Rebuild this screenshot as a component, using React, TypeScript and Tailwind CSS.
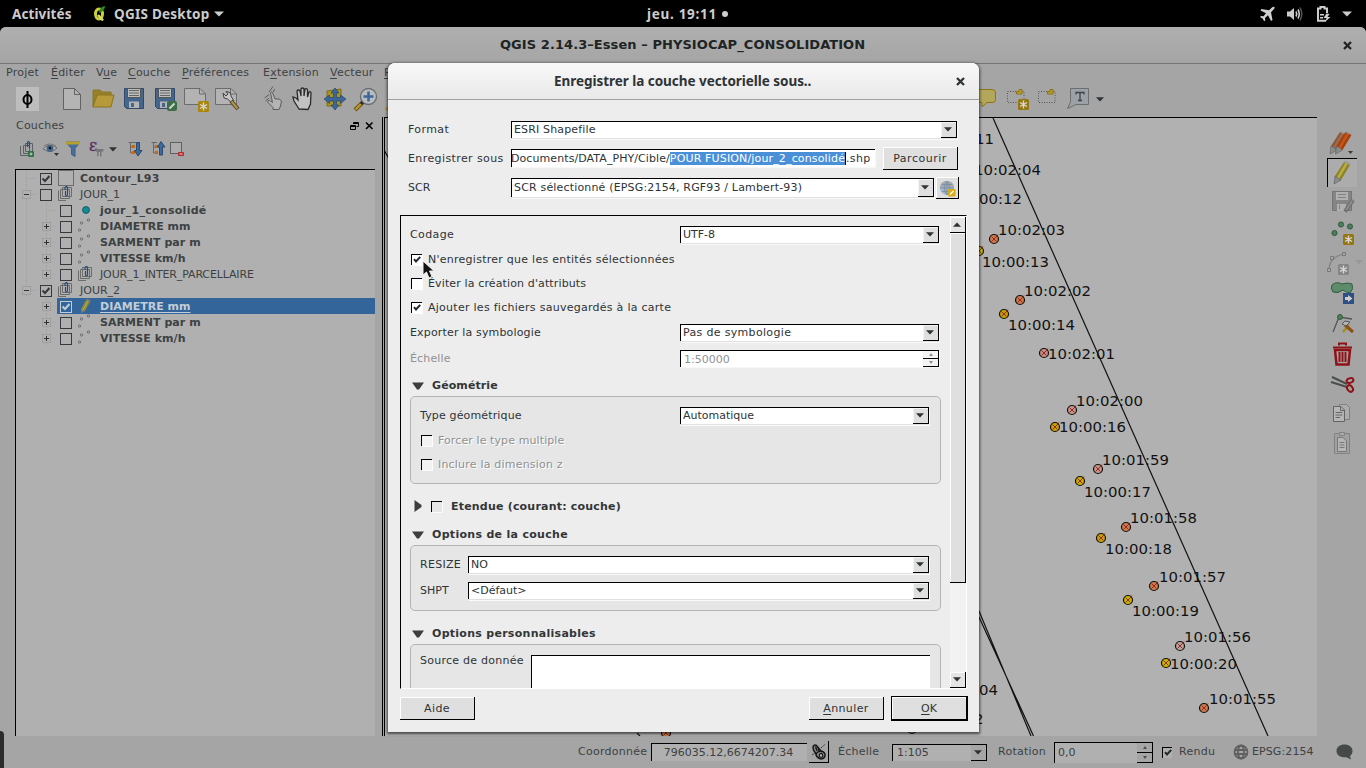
import React from "react";

type Kids = { children?: React.ReactNode };

function U({ children }: Kids) {
  return <span className="underline underline-offset-2">{children}</span>;
}

function Menu({ w, children }: Kids & { w: string }) {
  return <span className={`${w} shrink-0 whitespace-nowrap`}>{children}</span>;
}

function Down({ className = "" }: { className?: string }) {
  return (
    <svg className={`shrink-0 ${className}`} width="8" height="5" viewBox="0 0 8 5">
      <path d="M0 0.3H8L4 4.6Z" fill="#2e3436" />
    </svg>
  );
}

/* ---------- form widgets ---------- */

function Combo({ w, h = "h-[18px]", dim = false, children }: Kids & { w: string; h?: string; dim?: boolean }) {
  return (
    <div
      className={`${w} ${h} flex shrink-0 border-l border-t border-black ${
        dim ? "bg-[#b0b0b0]" : "bg-white shadow-[0_1px_0_#e0e0e0,1px_2px_0_#fafafa]"
      }`}
    >
      <div className="flex min-w-0 flex-1 items-center overflow-hidden whitespace-nowrap pl-[2px] leading-[14px]">{children}</div>
      <div
        className={`flex w-4 items-center justify-center border-b border-r border-black pr-px ${
          dim ? "bg-[#a6a6a6]" : "bg-[#dfdfdf] shadow-[inset_1px_1px_0_#f4f4f4]"
        }`}
      >
        <Down />
      </div>
    </div>
  );
}

function Spin({ w, h, dim = false, children }: Kids & { w: string; h: string; dim?: boolean }) {
  const fill = dim ? "#4a4e4f" : "#8f8f8f";
  return (
    <div
      className={`${w} ${h} flex shrink-0 border-l border-t border-black ${
        dim ? "bg-[#b0b0b0]" : "bg-white shadow-[0_1px_0_#f8f8f8,1px_1px_0_#f8f8f8]"
      }`}
    >
      <div className="flex flex-1 items-center pl-[3px] pt-px">{children}</div>
      <div className={`flex w-4 flex-col border-r border-black ${dim ? "bg-[#a6a6a6]" : "bg-[#f4f4f4]"}`}>
        <div className="flex flex-1 items-center justify-center border-b border-black">
          <svg width="4" height="3">
            <path d="M0 3L2 0L4 3Z" fill={fill} />
          </svg>
        </div>
        <div className="flex flex-1 items-center justify-center border-b border-black">
          <svg width="4" height="3">
            <path d="M0 0L2 3L4 0Z" fill={fill} />
          </svg>
        </div>
      </div>
    </div>
  );
}

function Check({ on = false, fill = "bg-white" }: { on?: boolean; fill?: string }) {
  return (
    <div className={`h-[11px] w-[11px] shrink-0 border-l border-t border-black ${fill} shadow-[1px_1px_0_#fcfcfc]`}>
      {on && (
        <svg width="10" height="10" viewBox="0 0 10 10">
          <path d="M2 4.2L4 6.4L8.2 1.8" stroke="#23292b" strokeWidth="2" fill="none" />
        </svg>
      )}
    </div>
  );
}

function Button({ w, h = "h-[23px]", children }: Kids & { w: string; h?: string }) {
  return (
    <div
      className={`${w} ${h} flex shrink-0 items-center justify-center border-b border-r border-black bg-[#dfdfdf] pt-[2px] shadow-[inset_1px_1px_0_#fff]`}
    >
      {children}
    </div>
  );
}

function Heading({ h, track, children }: Kids & { h: string; track: string }) {
  return (
    <div className={`${h} flex shrink-0 items-center pl-[2px] font-bold text-[#333637]`}>
      <svg width="12" height="8" viewBox="0 0 12 8" className="mr-[8px] mt-[2px]">
        <path d="M0 0.5H12L7 7.5H5Z" fill="#3d3d3d" />
      </svg>
      <span className={`mt-[2px] ${track}`}>{children}</span>
    </div>
  );
}

/* ---------- layer tree ---------- */

function GroupIcon() {
  return (
    <svg width="16" height="16" viewBox="0 0 16 16" fill="none">
      <path d="M0.500 4.500V14.500H8" stroke="#6a6d6c" />
      <path d="M2.500 3.500V12.500H11.500V3.500Z" stroke="#6a6d6c" />
      <path d="M4.500 1.500H13.500V10.500H4.500Z" stroke="#6a6d6c" />
      <path d="M7 4V1.500Q8.500 -0.500 9.500 1.500V9Q8.500 11 7.500 9V5" stroke="#284a80" strokeWidth="1.200" />
    </svg>
  );
}

function PointsIcon() {
  return (
    <svg width="16" height="16" viewBox="0 0 16 16" fill="none" stroke="#666968" strokeWidth="0.9">
      <circle cx="1.500" cy="12" r="1.200" />
      <circle cx="3.500" cy="5" r="1.200" />
      <circle cx="10.500" cy="2" r="1.200" />
    </svg>
  );
}

function Box({ on = false, light = false }: { on?: boolean; light?: boolean }) {
  const c = light ? "#c4cdd6" : "#35393b";
  return (
    <svg width="12" height="12" viewBox="0 0 12 12" fill="none" className="shrink-0">
      <rect x="0.500" y="0.500" width="11" height="11" stroke={c} />
      {on && <path d="M2.500 5.500L5 8L9.500 3" stroke={c} strokeWidth="2" />}
    </svg>
  );
}

function Expander({ kind }: { kind: "+" | "-" | "" }) {
  return (
    <svg width="14" height="16" viewBox="0 0 14 16" fill="none" className="shrink-0">
      {kind === "" ? (
        <path d="M4.500 0V16M4.500 8.500H14" stroke="#a0a0a0" strokeDasharray="1 1" />
      ) : (
        <>
          <path d="M4.500 0V4M4.500 13V16M9 8.500H14" stroke="#a0a0a0" strokeDasharray="1 1" />
          <rect x="0.500" y="4.500" width="8" height="8" stroke="#9e9e9e" />
          <path d={kind === "+" ? "M2 8.500H7M4.500 6V11" : "M2 8.500H7"} stroke="#2e3436" />
        </>
      )}
    </svg>
  );
}

type Row = { name: string; lvl: 0 | 1; exp: "+" | "-" | ""; on?: boolean; cls?: string; icon: string; sel?: boolean; trunk?: boolean };

const rows: Row[] = [
  { name: "Contour_L93", lvl: 0, exp: "", on: true, cls: "font-bold tracking-[0.2px]", icon: "poly" },
  { name: "JOUR_1", lvl: 0, exp: "-", icon: "group" },
  { name: "jour_1_consolidé", lvl: 1, exp: "", cls: "font-bold tracking-[0.28px]", icon: "dot", trunk: true },
  { name: "DIAMETRE mm", lvl: 1, exp: "+", cls: "font-bold", icon: "pts", trunk: true },
  { name: "SARMENT par m", lvl: 1, exp: "+", cls: "font-bold tracking-[0.06px]", icon: "pts", trunk: true },
  { name: "VITESSE km/h", lvl: 1, exp: "+", cls: "font-bold tracking-[0.05px]", icon: "pts", trunk: true },
  { name: "JOUR_1_INTER_PARCELLAIRE", lvl: 1, exp: "+", cls: "tracking-[-0.13px]", icon: "group", trunk: true },
  { name: "JOUR_2", lvl: 0, exp: "-", on: true, icon: "group" },
  { name: "DIAMETRE mm", lvl: 1, exp: "+", on: true, cls: "font-bold", icon: "pencil", sel: true },
  { name: "SARMENT par m", lvl: 1, exp: "+", cls: "font-bold tracking-[0.06px]", icon: "pts" },
  { name: "VITESSE km/h", lvl: 1, exp: "+", cls: "font-bold tracking-[0.05px]", icon: "pts" },
];

function TreeRow({ r }: { r: Row }) {
  return (
    <div className="flex h-4 pl-[6px]">
      {r.lvl === 1 && (
        <svg width="20" height="16" className="shrink-0">
          {r.trunk && <path d="M4.500 0V16" stroke="#a0a0a0" strokeDasharray="1 1" />}
        </svg>
      )}
      <Expander kind={r.exp} />
      <div className={`ml-px flex min-w-0 flex-1 items-center ${r.sel ? "bg-[#33659a] text-[#c3cdd6]" : ""}`}>
        <div className="ml-[3px] mt-[2px]">
          <Box on={r.on} light={r.sel} />
        </div>
        <div className="ml-[6px] w-4 shrink-0">
          {r.icon === "group" && <GroupIcon />}
          {r.icon === "pts" && <PointsIcon />}
          {r.icon === "poly" && <div className="h-4 w-4 border border-[#6a6d6c]" />}
          {r.icon === "dot" && (
            <svg width="16" height="16">
              <circle cx="8" cy="8" r="3.400" fill="#0f8d97" stroke="#155a60" />
            </svg>
          )}
          {r.icon === "pencil" && (
            <svg width="16" height="16" viewBox="0 0 16 16">
              <path d="M3 11L8 2L12 4L7 13L3 15Z" fill="#8f8b35" />
              <path d="M3 11L7 13L3 15ZM8 2L9 0.500L13 2.500L12 4Z" fill="#777d80" />
              <path d="M5 12L10 3" stroke="#b5b25e" />
            </svg>
          )}
        </div>
        <span className={`ml-[6px] mt-[2px] whitespace-nowrap ${r.cls ?? ""} ${r.sel ? "underline underline-offset-2" : ""}`}>
          {r.name}
        </span>
      </div>
    </div>
  );
}

/* ---------- toolbar ---------- */

function Ico({ w = "w-[31px]", children }: Kids & { w?: string }) {
  return (
    <div className={`${w} flex shrink-0 justify-center`}>
      <svg width="24" height="24" viewBox="0 0 24 24" fill="none" className="shrink-0 overflow-visible">
        {children}
      </svg>
    </div>
  );
}

function Star({ x, y, fill = "#a8870c" }: { x: number; y: number; fill?: string }) {
  return (
    <g transform={`translate(${x} ${y})`}>
      <rect width="11" height="11" rx="1.500" fill={fill} />
      <path d="M5.500 1.500V9.500M2 3.500L9 7.500M9 3.500L2 7.500" stroke="#d8d8d8" strokeWidth="1.400" />
    </g>
  );
}

function Floppy() {
  return (
    <g>
      <path d="M2.500 1.500H21.500V21.500H4.500L2.500 19.500Z" fill="#44658c" stroke="#33496a" />
      <path d="M5.500 1.500H18.500V10.500H5.500Z" fill="#bcbcbc" stroke="#555" />
      <path d="M7 3.500H17M7 6H17M7 8.500H17" stroke="#666" />
      <path d="M7 14.500H17V21H7Z" fill="#b4b4b4" />
      <path d="M9 16H12V20H9Z" fill="#44658c" />
    </g>
  );
}

function MainToolbar() {
  return (
    <div className="flex h-[36px] shrink-0 items-center overflow-hidden pl-4">
      <div className="mr-[17px] flex h-[24px] w-[23px] shrink-0 items-center justify-center bg-[#bdbdbd]">
        <svg width="11" height="17" viewBox="0 0 11 17" fill="none" stroke="#000" strokeWidth="2">
          <ellipse cx="5.500" cy="8.500" rx="4" ry="4.500" />
          <path d="M5.500 0V17" />
        </svg>
      </div>
      <Ico>
        <path d="M3.500 1.500H14.500L20.500 7.500V22.500H3.500Z" fill="#b4b4b4" stroke="#606362" />
        <path d="M14.500 1.500V7.500H20.500" stroke="#606362" />
      </Ico>
      <Ico>
        <path d="M2 20V3H9L11 5H20V9" fill="#95802b" stroke="#8a7420" />
        <path d="M2 20L6 8H23L20 20Z" fill="#b69a3a" stroke="#8a7420" />
      </Ico>
      <Ico>
        <Floppy />
      </Ico>
      <Ico>
        <Floppy />
        <rect x="14" y="14" width="10" height="10" rx="2" fill="#3e6e48" />
        <path d="M16.500 21.500L21.500 16.500" stroke="#d0d6d0" strokeWidth="2" />
      </Ico>
      <Ico>
        <path d="M0.500 1.500H16L21.500 7V17.500H0.500Z" fill="#b3b3b3" stroke="#6a6d6c" />
        <path d="M15.500 1.500V7H21.500" stroke="#6a6d6c" />
        <Star x={14} y={14} />
      </Ico>
      <Ico>
        <path d="M0.500 1.500H16L21.500 7V17.500H0.500Z" fill="#b3b3b3" stroke="#6a6d6c" />
        <path d="M15.500 1.500V7H21.500" stroke="#6a6d6c" />
        <path d="M8 6L11 9L13 7L11 4.500L15 5.500L16.500 10L19 14L17 16L12.500 12L9 11Z" fill="#c6c6c6" stroke="#444" />
        <path d="M16 14L23 22" stroke="#4a4530" strokeWidth="4" />
        <path d="M16.500 14.500L22.500 21.500" stroke="#b59545" strokeWidth="2" />
      </Ico>
      <div className="w-[15px] shrink-0" />
      <Ico>
        <path
          d="M12 22.500V20.500L7 15.500Q6 13 8.500 13.500L11.500 15.500L9.500 6Q10 4 11.500 5.500L14 12L18 12L20.500 14L19.500 19L18 22.500Z"
          fill="#b4b4b4"
          stroke="#5b5e5d"
        />
        <path d="M3.500 11L8 7.500M4.500 14L8 11M8 5L12 -0.500M12.500 5L13.500 2" stroke="#5b5e5d" />
      </Ico>
      <Ico>
        <path
          d="M7 22L2 14L1 10L4 11L6 13L5 4Q6 2 8 4L9 9V2Q10.500 0 12 2V9L13 2Q15 1 15.500 3V10L17 5Q19 4 19 6L18.500 17L16 22.500Z"
          fill="#c2c2c2"
          stroke="#2a2c2c"
          strokeWidth="1.300"
        />
      </Ico>
      <Ico>
        <path d="M4 4L18 2V19H4Z" fill="#aa9423" stroke="#7e6b14" />
        <path
          d="M12 1L16 6H13.500V10.500H17.500V8L23 12L17.500 16.500V14H13.500V18H16L12 23L8 18H10.500V14H6.500V16.500L1 12L6.500 8V10.500H10.500V6H8Z"
          fill="#3c6696"
          stroke="#28466a"
          strokeWidth="0.7"
        />
      </Ico>
      <Ico>
        <path d="M1 23L9 15" stroke="#6e5312" strokeWidth="4" />
        <path d="M1.500 22.500L8 16" stroke="#c09a30" strokeWidth="2" />
        <path d="M7 17L10 14" stroke="#222" strokeWidth="3" />
        <circle cx="14.500" cy="9.500" r="8" fill="#b9bcbe" stroke="#686b6c" strokeWidth="1.300" />
        <path d="M14.500 4.500V14.500M9.500 9.500H19.500" stroke="#3c6696" strokeWidth="2.500" />
      </Ico>
      <Ico>
        <path d="M1 23L9 15" stroke="#b08d28" strokeWidth="3" />
      </Ico>
      <div className="w-[541px] shrink-0" />
      <Ico w="w-[62px]">
        <path d="M-6 2.500H20Q23.500 2.500 23.500 6V13Q23.500 15.500 20 15.500H15L10 20V15.500H-6" fill="#b3a75c" stroke="#8f7614" />
      </Ico>
      <div className="-ml-[12px] flex">
        <Ico>
          <path d="M0.500 4.500H17V15.500H0.500Z" stroke="#555" strokeDasharray="1 1.500" />
          <path d="M9.500 7V4.500H12V2.500H15V7Z" fill="#b89d20" stroke="#8f7614" />
          <Star x={11} y={12} fill="#957711" />
        </Ico>
        <Ico>
          <path d="M0.500 4.500H17V15.500H0.500Z" stroke="#555" strokeDasharray="1 1.500" />
          <path d="M9.500 7V4.500H12V2.500H15V7Z" fill="#b89d20" stroke="#8f7614" />
        </Ico>
      </div>
      <Ico w="w-[28px]">
        <path d="M3.500 1.500H21.500V17.500H9L0.500 21.500L3.500 15Z" fill="#9ba1a6" stroke="#6a6f72" />
        <path d="M9 7.500V5.500H17V7.500M13 5.500V13.500M11 13.500H15" stroke="#3b4348" strokeWidth="1.300" />
      </Ico>
      <Down className="ml-[3px]" />
    </div>
  );
}

function SmallIco({ w, children }: Kids & { w: string }) {
  return (
    <div className={`${w} shrink-0`}>
      <svg width="16" height="16" viewBox="0 0 16 16" fill="none" className="overflow-visible">
        {children}
      </svg>
    </div>
  );
}

function LayerPanel() {
  return (
    <div className="flex w-[382px] shrink-0 flex-col">
      <div className="flex h-[17px] shrink-0 items-center pl-4">
        <span className="tracking-[0.2px]">Couches</span>
        <svg width="24" height="10" viewBox="0 0 24 10" fill="none" stroke="#000" className="ml-auto mr-[8px]">
          <path d="M3.500 3V1.500H8.500V5.500H6.500M3.500 2.500H8.500M0.500 4.500H5.500V8.500H0.500ZM0.500 5.500H5.500" />
          <path d="M16 1.500L22.500 8M22.500 1.500L16 8" strokeWidth="1.600" />
        </svg>
      </div>
      <div className="flex h-[30px] shrink-0 items-center pl-5">
        <SmallIco w="w-[23px]">
          <path d="M0.500 5V14.500H8M3.500 4.500H9.500V12.500H3.500ZM5.500 2.500H12.500V10.500H5.500Z" stroke="#5c6364" />
          <path d="M7.500 6V1.500Q8.500 -1 9.500 1.500V7" stroke="#284a80" strokeWidth="1.200" />
          <rect x="8" y="10" width="6" height="6" rx="1" fill="#2f7046" />
          <path d="M11 11.500V14.500M9.500 13H12.500" stroke="#ccc" />
        </SmallIco>
        <SmallIco w="w-[22px]">
          <path d="M0 8Q6 1 14 7Q8 13 0 8Z" fill="#b8b8b8" stroke="#6c6c6c" />
          <path d="M1 5Q6 1 13 5" stroke="#777" />
          <circle cx="7" cy="7.500" r="3.500" fill="#44658c" />
          <circle cx="7" cy="7" r="1.300" fill="#111" />
          <path d="M11 12H16L13.500 15Z" fill="#2e3436" />
        </SmallIco>
        <SmallIco w="w-[24px]">
          <path d="M1 1H15L10 7.500V15.500L6.500 13.500V7.500Z" fill="#46709c" stroke="#3f6186" />
          <rect x="1" y="0.500" width="14" height="3" fill="#b7a02c" />
        </SmallIco>
        <SmallIco w="w-[20px]">
          <text x="0" y="10" fontSize="16" fontFamily="DejaVu Serif" fill="#5d2f63" stroke="#5d2f63" strokeWidth="0.400">
            ε
          </text>
          <path d="M6.500 8H14.500V10L12.500 11V15.500H11V11H9.500V15H8V11L6.500 10Z" fill="#777" />
        </SmallIco>
        <Down className="mr-[11px]" />
        <SmallIco w="w-[23px]">
          <path d="M0.500 1.500H8M2.500 1.500V12H5M2.500 6H5" stroke="#666" />
          <rect x="4" y="4" width="3" height="3" fill="#c06a14" />
          <rect x="4" y="10" width="3" height="3" fill="#c06a14" />
          <path d="M8.500 1.500H11.500V9.500H14L10 15L6.500 9.500H8.500Z" fill="#3f6996" stroke="#2a4a70" />
        </SmallIco>
        <SmallIco w="w-[23px]">
          <path d="M0.500 1.500H6M2.500 1.500V12H5M2.500 6H5" stroke="#666" />
          <rect x="4" y="4" width="3" height="3" fill="#c06a14" />
          <rect x="4" y="10" width="3" height="3" fill="#c06a14" />
          <path d="M8.500 14H11.500V6H14L10 0.500L6.500 6H8.500Z" fill="#3f6996" stroke="#2a4a70" />
        </SmallIco>
        <SmallIco w="w-[20px]">
          <path d="M-3.500 1.500H7.500V12.500H-3.500Z" fill="#acacac" stroke="#5c6060" />
          <rect x="4" y="11" width="6" height="4" rx="1" fill="#b52a30" />
          <path d="M5.500 13H8.500" stroke="#ddd" />
        </SmallIco>
      </div>
      <div className="ml-[15px] mr-[7px] mt-[5px] flex-1 border-l border-t border-black bg-[#b0b0b0]">
        {rows.map((r, i) => (
          <TreeRow key={i} r={r} />
        ))}
      </div>
    </div>
  );
}

/* ---------- map ---------- */

const labels: [string, number, number][] = [
  ["10:00:11", 927, 139], ["10:02:04", 974, 170], ["10:00:12", 955, 199], ["10:02:03", 998, 230], ["10:00:13", 982, 262],
  ["10:02:02", 1024, 291], ["10:00:14", 1008, 324.5], ["10:02:01", 1048, 353.5], ["10:02:00", 1076, 401], ["10:00:16", 1059, 427],
  ["10:01:59", 1102, 460], ["10:00:17", 1084, 492], ["10:01:58", 1130, 518], ["10:00:18", 1105, 548.5], ["10:01:57", 1159, 576.5],
  ["10:00:19", 1132, 610.5], ["10:01:56", 1184, 636.5], ["10:00:20", 1170, 664], ["10:01:55", 1209, 699], ["04", 979, 690],
  ["2", 974, 719],
];

const points: [number, number, string][] = [
  [994, 239, "#c47c50"], [979, 251, "#c2bc00"], [1020, 300, "#c47c50"], [1004, 314, "#c2a400"], [1044, 353, "#bd9086"],
  [1072, 410, "#bd9690"], [1055, 427, "#c2a400"], [1098, 469, "#bd9690"], [1080, 481, "#c2b000"], [1126, 527, "#c47c50"],
  [1101, 538, "#c2a400"], [1154, 586, "#c47c50"], [1128, 600, "#c2b800"], [1180, 646, "#b5a5a3"], [1166, 663, "#c2b800"],
  [1204, 708, "#c47c50"], [666, 733, "#c47c50"], [912, 729, "#c47c50"],
];

function MapView() {
  return (
    <div className="flex-1 overflow-hidden border-l border-t border-black bg-[#b1b1b1]">
      <svg width="932" height="618" viewBox="385 118 932 618" className="block">
        <g stroke="#111" strokeWidth="1.200" fill="none">
          <path d="M993 118L1268 736" />
          <path d="M979 611L1031 736M979 617L1033.500 736" />
          <path d="M384 150L392 164M637 733L640 736" />
        </g>
        {points.map(([x, y, c], i) => (
          <g key={i}>
            <path d={`M${x - 3} ${y - 3}L${x + 3} ${y + 3}M${x + 4} ${y - 4.500}L${x - 3} ${y + 3}`} stroke="#a82418" strokeWidth="1" />
            <circle cx={x} cy={y} r="4.500" fill={c} stroke="#15100c" strokeWidth="1.200" />
            <path d={`M${x - 2.5} ${y - 2.5}L${x + 2.500} ${y + 2.500}M${x + 3} ${y - 3}L${x - 2.500} ${y + 2.500}`} stroke="#a82418" strokeWidth="1" />
          </g>
        ))}
        <g fontFamily="DejaVu Sans, sans-serif" fontSize="14.900" fill="#111">
          {labels.map(([t, x, y], i) => (
            <text key={i} x={x} y={y + 5}>
              {t}
            </text>
          ))}
        </g>
      </svg>
    </div>
  );
}

function Pencil({ c1, c2 }: { c1: string; c2: string }) {
  return (
    <g>
      <path d="M4 15L13 1L19 4L10 19Z" fill={c1} />
      <path d="M7 17L15.500 2.500" stroke={c2} strokeWidth="2.500" />
      <path d="M4 15L10 19L3 23Z" fill="#8a8d8c" stroke="#5a5d5c" strokeWidth="0.600" />
      <path d="M13 1L14 -0.500L20 2.500L19 4Z" fill="#9b9e9d" />
    </g>
  );
}

function EditBar() {
  return (
    <div className="flex w-[49px] shrink-0 flex-col items-center pl-[1px] pt-[11px]">
      <div className="flex h-[30px] items-center">
        <Ico>
          <g transform="translate(-3 0)">
            <Pencil c1="#8c5639" c2="#a06a4a" />
          </g>
          <g transform="translate(2.500 0)">
            <Pencil c1="#a63f10" c2="#c4561a" />
          </g>
          <path d="M18 20H23L20.500 23Z" fill="#35393b" />
        </Ico>
      </div>
      <div className="flex h-[29px] w-[30px] items-center justify-center border-l border-t border-black bg-[#acacac]">
        <Ico>
          <Pencil c1="#8d8326" c2="#b8ad45" />
        </Ico>
      </div>
      <div className="flex h-[30px] items-center">
        <Ico>
          <path d="M2.500 1.500H21.500V20.500H2.500Z" fill="#858585" stroke="#757575" />
          <path d="M6 2H18V10H6ZM7 14H16V21H7Z" fill="#b0b0b0" />
          <path d="M8 4.500H16M8 7.500H16M9.500 15V19" stroke="#808080" />
          <path d="M15 21.500L23 10" stroke="#6f6f6f" strokeWidth="4" />
          <path d="M16 20L22.500 10.500" stroke="#8d8d8d" strokeWidth="2" />
        </Ico>
      </div>
      <div className="flex h-[31px] items-center">
        <Ico>
          <g fill="#4d7d5c" stroke="#335c40">
            <circle cx="4.500" cy="12" r="2.600" />
            <circle cx="11" cy="3.500" r="2.600" />
            <circle cx="20" cy="5.500" r="2.600" />
          </g>
          <Star x={13} y={13} fill="#957711" />
        </Ico>
      </div>
      <div className="flex h-[30px] items-center">
        <Ico>
          <path d="M-1 19Q-1 6 14 3" stroke="#888" strokeWidth="1.500" />
          <path d="M-2.500 17.500H0.500V20.500H-2.500ZM0.500 5.500H3.500V8.500H0.500ZM12.500 1.500H15.500V4.500H12.500Z" fill="#aaa" stroke="#777" />
          <Star x={8} y={13} fill="#858585" />
          <path d="M25 9H33L29 13Z" fill="#979797" />
        </Ico>
      </div>
      <div className="flex h-[30px] items-center">
        <Ico>
          <path d="M2 4Q6 0 12 3Q18 1 22 3Q24 8 20 12Q15 11 13 9Q8 13 3 11Q0 7 2 4Z" fill="#5c8c6a" stroke="#335c40" />
          <rect x="13" y="12" width="11" height="11" fill="#2d4f86" />
          <path d="M15 16H18V14L22.500 17.500L18 21V19H15Z" fill="#ccc" />
        </Ico>
      </div>
      <div className="flex h-[31px] items-center">
        <Ico>
          <path d="M3 20L9 5L22 7" stroke="#555" strokeWidth="1.300" />
          <circle cx="10" cy="5" r="2.500" fill="#4d7d5c" stroke="#335c40" />
          <path d="M13 20L19 13" stroke="#a58c28" strokeWidth="2.500" />
          <path d="M15 13L23 20" stroke="#8b5315" strokeWidth="3" />
          <path d="M12 12L15 9L20 10L16 14Z" fill="#b5b5b5" stroke="#555" />
        </Ico>
      </div>
      <div className="flex h-[30px] items-center">
        <Ico>
          <path d="M5 8H20L18.500 22.500H6.500Z" fill="#a6a6a6" stroke="#8f1217" strokeWidth="2.500" />
          <path d="M9.500 10V20M12.500 10V20M15.500 10V20" stroke="#8f1217" strokeWidth="2" />
          <path d="M3 5.500H22M9 3.500V1.500H16V3.500" stroke="#8f1217" strokeWidth="2" />
        </Ico>
      </div>
      <div className="flex h-[29px] items-center">
        <Ico>
          <path d="M1 10L17 15M2 5L17 12" stroke="#4a4d4d" strokeWidth="2" />
          <ellipse cx="20" cy="8.500" rx="3.500" ry="2.300" stroke="#8f1217" strokeWidth="2" transform="rotate(-20 20 8.500)" />
          <ellipse cx="20" cy="16.500" rx="2.600" ry="3.500" stroke="#8f1217" strokeWidth="2" transform="rotate(-40 20 16.500)" />
        </Ico>
      </div>
      <div className="flex h-[30px] items-center">
        <Ico>
          <path d="M9.500 3.500H16.500L19.500 6.500V18.500H9.500Z" fill="#adadad" stroke="#808080" />
          <path d="M3.500 5.500H11L14.500 9V20.500H3.500Z" fill="#b6b6b6" stroke="#626565" />
          <path d="M10.500 6V9.500H14M5.500 11.500H12.500M5.500 14H12.500M5.500 16.500H10" stroke="#626565" />
        </Ico>
      </div>
      <div className="flex h-[30px] items-center">
        <Ico>
          <path d="M4.500 2.500H19.500V22.500H4.500Z" fill="#a0a0a0" stroke="#828282" />
          <path d="M7.500 6.500H13L16.500 10V20.500H7.500Z" fill="#b6b6b6" stroke="#777" />
          <path d="M9.500 1.500H14.500V4.500H9.500Z" fill="#aaa" stroke="#828282" />
          <path d="M9.500 11.500H14.500M9.500 14H14.500M9.500 16.500H14.500" stroke="#777" />
        </Ico>
      </div>
    </div>
  );
}

function StatusBar() {
  return (
    <div className="flex h-[32px] shrink-0 items-center pl-[578px]">
      <span className="w-[73px] tracking-[0.25px]">Coordonnée</span>
      <div className="flex h-[18px] w-[156px] items-center justify-center border-l border-t border-black bg-[#b0b0b0] pr-[2px] pt-px">
        796035.12,6674207.34
      </div>
      <div className="ml-[2px] flex h-[22px] w-[20px] items-center justify-center border-b border-r border-black">
        <svg width="16" height="18" viewBox="0 0 16 18" fill="none" stroke="#161616">
          <path d="M2 4Q3 1 5.500 2.500L10 8Q14.500 9 14 13Q12.500 17 8.500 15.500Q5 14 5 11L2.500 7Z" fill="#8d8d8d" strokeWidth="1.500" />
          <path d="M4.500 3.500L6 8M7 4L8 8M5 11Q8 7 11 9" strokeWidth="1.400" />
          <circle cx="10" cy="12.500" r="1.800" fill="#bbb" strokeWidth="1.200" />
          <path d="M10 5L14.500 1M1 12L4 10" strokeWidth="0.800" strokeDasharray="2 1" />
        </svg>
      </div>
      <span className="ml-[9px] w-[54px] tracking-[0.25px]">Échelle</span>
      <Combo w="w-[95px]" h="h-[17px]" dim>
        <span className="pl-[2px] pt-px">1:105</span>
      </Combo>
      <span className="ml-[11px] w-[56px] tracking-[0.25px]">Rotation</span>
      <Spin w="w-[99px]" h="h-[21px]" dim>
        0,0
      </Spin>
      <div className="ml-[9px] h-[11px] w-[10px] border-l border-t border-black bg-[#b0b0b0]">
        <svg width="10" height="10" viewBox="0 0 10 10">
          <path d="M2 4.200L4 6.400L8.200 1.800" stroke="#23292b" strokeWidth="2" fill="none" />
        </svg>
      </div>
      <span className="ml-[7px] w-[54px] tracking-[0.3px]">Rendu</span>
      <svg width="16" height="16" viewBox="0 0 16 16" fill="none" stroke="#606060" strokeWidth="1.800">
        <circle cx="8" cy="8" r="6.500" />
        <ellipse cx="8" cy="8" rx="3" ry="6.500" />
        <path d="M2 6H14M2 10H14" />
      </svg>
      <span className="ml-[3px] w-[84px] tracking-[0.1px]">EPSG:2154</span>
      <svg width="17" height="16" viewBox="0 0 17 16">
        <path d="M8.500 0.500C13 0.500 16.500 3 16.500 7C16.500 9 15.500 11 14 12L15 15.500L10.500 13.200C4 13.800 0.500 11 0.500 7C0.500 3 4 0.500 8.500 0.500Z" fill="#45494a" />
      </svg>
    </div>
  );
}

/* ---------- dialog ---------- */

function SaveDialog() {
  return (
    <div className="absolute left-[388px] top-[63px] flex h-[669px] w-[591px] flex-col rounded-t-[7px] bg-[#ededed] text-[#2e3436] shadow-[0_1px_3px_1px_rgba(0,0,0,0.6)]">
      <div className="flex h-[37px] shrink-0 items-center rounded-t-[7px] border-b border-[#a1a1a1] bg-gradient-to-b from-[#f8f8f8] to-[#e9e9e9] pl-[166px]">
        <span className="whitespace-nowrap font-['Noto_Sans'] text-[13.5px] font-bold tracking-[-0.04px]">Enregistrer la couche vectorielle sous..</span>
        <svg width="9" height="9" viewBox="0 0 9 9" className="ml-auto mr-[14px]">
          <path d="M1 1L8 8M8 1L1 8" stroke="#2e3436" strokeWidth="2.300" />
        </svg>
      </div>

      <div className="flex flex-col pl-5">
        <div className="mt-[20px] flex h-[19px] items-center">
          <span className="w-[103px] tracking-[0.4px]">Format</span>
          <Combo w="w-[446px]" h="h-[17px]">
            <span className="tracking-[0.15px]">ESRI Shapefile</span>
          </Combo>
        </div>
        <div className="mt-[7px] flex h-[24px] items-center">
          <span className="mt-[2px] w-[103px] tracking-[0.4px]">Enregistrer sous</span>
          <div className="flex h-[18px] w-[364px] items-center overflow-hidden whitespace-nowrap border-l border-t border-black bg-white leading-[13px] shadow-[1px_1px_0_#f8f8f8]">
            <span className="-ml-px tracking-[0.08px]">Documents/DATA_PHY/Cible/</span>
            <span className="border-r border-black bg-[#4a90d9] tracking-[0.15px] text-white">POUR FUSION/jour_2_consolidé</span>
            <span className="tracking-[0.3px]">.shp</span>
          </div>
          <div className="ml-[8px] mt-px">
            <Button w="w-[75px]">
              <span className="tracking-[0.5px]">Parcourir</span>
            </Button>
          </div>
        </div>
        <div className="mt-[6px] flex h-[23px] items-center">
          <span className="w-[103px]">SCR</span>
          <Combo w="w-[423px]" h="h-[19px]">
            <span className="tracking-[0.17px]">SCR sélectionné (EPSG:2154, RGF93 / Lambert-93)</span>
          </Combo>
          <div className="ml-[2px] mt-px">
            <Button w="w-[23px]" h="h-[22px]">
              <svg width="17" height="17" viewBox="0 0 17 17" fill="none">
                <circle cx="8" cy="8" r="7" fill="#9fb8d0" />
                <path d="M1 8Q1 1 8 1Q15 1 15 8Z" fill="#a6abb0" />
                <path d="M1 8H15M8 1V15M3 4.500H13M3 11.500H13M8 1Q2.500 8 8 15M8 1Q13.500 8 8 15" stroke="#758da3" strokeWidth="0.8" />
                <rect x="9" y="9" width="7.500" height="7.500" rx="1" fill="#d8ac12" />
                <path d="M11 14.500L14.500 11" stroke="#fff" strokeWidth="1.500" />
              </svg>
            </Button>
          </div>
        </div>
      </div>

      <div className="ml-[12px] mt-[16px] flex h-[474px] w-[567px] shrink-0 border border-b-white border-l-black border-r-white border-t-black">
        <div className="flex flex-1 flex-col overflow-hidden pl-[9px] [&>*]:shrink-0">
          <div className="mt-[10px] flex h-[17px] items-center">
            <span className="w-[270px] tracking-[0.4px]">Codage</span>
            <Combo w="w-[259px]" h="h-[17px]">
              UTF-8
            </Combo>
          </div>
          <div className="mt-[4px] flex h-6 items-center pl-[1px]">
            <Check on />
            <span className="ml-[6px] mt-[2px] tracking-[0.26px]">N'enregistrer que les entités sélectionnées</span>
          </div>
          <div className="flex h-6 items-center pl-[1px]">
            <Check />
            <span className="ml-[6px] mt-[2px] tracking-[0.13px]">Éviter la création d'attributs</span>
          </div>
          <div className="flex h-6 items-center pl-[1px]">
            <Check on />
            <span className="ml-[6px] mt-[2px] tracking-[0.27px]">Ajouter les fichiers sauvegardés à la carte</span>
          </div>
          <div className="mt-[5px] flex h-[17px] items-center">
            <span className="w-[270px] tracking-[0.16px]">Exporter la symbologie</span>
            <Combo w="w-[259px]" h="h-[17px]">
              <span className="tracking-[0.33px]">Pas de symbologie</span>
            </Combo>
          </div>
          <div className="mt-[9px] flex h-[17px] items-center text-[#8f9192]">
            <span className="w-[270px] tracking-[0.15px]">Échelle</span>
            <Spin w="w-[259px]" h="h-[17px]">
              1:50000
            </Spin>
          </div>
          <Heading h="h-[29px] pt-[6px]" track="tracking-[0.1px]">Géométrie</Heading>
          <div className="flex h-[88px] w-[531px] flex-col rounded-[5px] border border-[#b4b4b4] bg-[#e6e6e6] pl-[9px]">
            <div className="mt-[10px] flex h-[17px] items-center">
              <span className="w-[260px] tracking-[0.15px]">Type géométrique</span>
              <Combo w="w-[249px]" h="h-[17px]">
                Automatique
              </Combo>
            </div>
            <div className="mt-[4px] flex h-6 items-center pl-[1px] text-[#8f9192]">
              <Check fill="bg-[#f2f2f2]" />
              <span className="ml-[6px] mt-[2px] tracking-[0.1px] [text-shadow:1px_1px_0_#fff]">Forcer le type multiple</span>
            </div>
            <div className="flex h-6 items-center pl-[1px] text-[#8f9192]">
              <Check fill="bg-[#f2f2f2]" />
              <span className="ml-[6px] mt-[2px] tracking-[0.2px] [text-shadow:1px_1px_0_#fff]">Inclure la dimension z</span>
            </div>
          </div>
          <div className="mt-[8px] flex h-[28px] items-center pl-[4px] font-bold text-[#333637]">
            <svg width="8" height="12" viewBox="0 0 8 12" className="mr-[9px]">
              <path d="M0.500 0L7.500 5V7L0.500 12Z" fill="#3d3d3d" />
            </svg>
            <Check fill="bg-[#e6e6e6]" />
            <span className="ml-[9px] mt-[2px] tracking-[0.2px]">Etendue (courant: couche)</span>
          </div>
          <Heading h="h-[25px] pt-[3px]" track="tracking-[0.3px]">Options de la couche</Heading>
          <div className="flex h-[66px] w-[531px] flex-col rounded-[5px] border border-[#b4b4b4] bg-[#e6e6e6] pl-[9px]">
            <div className="mt-[10px] flex h-[17px] items-center">
              <span className="w-[48px] tracking-[0.3px]">RESIZE</span>
              <Combo w="w-[461px]" h="h-[17px]">
                NO
              </Combo>
            </div>
            <div className="mt-[9px] flex h-[17px] items-center">
              <span className="w-[48px]">SHPT</span>
              <Combo w="w-[461px]" h="h-[17px]">
                &lt;Défaut&gt;
              </Combo>
            </div>
          </div>
          <Heading h="h-[33px] pt-[11px]" track="tracking-[0.28px]">Options personnalisables</Heading>
          <div className="flex h-[80px] w-[531px] rounded-[5px] border border-[#b4b4b4] bg-[#e6e6e6] pl-[9px] pt-[10px]">
            <span className="w-[111px] leading-[12px] tracking-[0.25px]">Source de donnée</span>
            <div className="h-[70px] w-[399px] border-l border-t border-black bg-white" />
          </div>
        </div>
        <div className="flex w-4 shrink-0 flex-col bg-[#f2f2f2] pt-px">
          <div className="flex h-[16px] items-center justify-center border-b border-r border-black bg-[#e4e4e4] pr-px shadow-[inset_1px_1px_0_#fff]">
            <Down className="rotate-180" />
          </div>
          <div className="h-[350px] border-b border-r border-black bg-[#dfdfdf] shadow-[inset_1px_1px_0_#fff]" />
          <div className="flex-1" />
          <div className="flex h-[16px] items-center justify-center border-b border-r border-black bg-[#e4e4e4] pr-px shadow-[inset_1px_1px_0_#fff]">
            <Down />
          </div>
        </div>
      </div>

      <div className="mt-[7px] flex h-[25px] shrink-0 items-center pl-[12px]">
        <Button w="w-[75px]">
          <span className="tracking-[0.4px]">Aide</span>
        </Button>
        <div className="w-[334px]" />
        <Button w="w-[75px]">
          <span className="tracking-[0.4px]">
            <U>A</U>nnuler
          </span>
        </Button>
        <div className="ml-[7px] border border-black">
          <Button w="w-[75px]">
            <span>
              <U>O</U>K
            </span>
          </Button>
        </div>
      </div>

      <svg width="13" height="19" viewBox="0 0 13 19" className="absolute left-[34px] top-[197px]">
        <path d="M1 1V15L4.500 12L7 18L10 16.500L7.500 11H12Z" fill="#111" stroke="#eee" strokeWidth="1" />
      </svg>
    </div>
  );
}

export default function App() {
  return (
    <div className="relative flex h-[768px] w-[1366px] flex-col overflow-hidden bg-black font-['DejaVu_Sans',sans-serif] text-[11px] leading-[14px] text-[#3d4142]">
      <div className="flex h-[27px] shrink-0 items-center font-['Noto_Sans',sans-serif] text-[13.5px] font-bold text-[#ccc]">
        <span className="ml-3 w-[80px] tracking-[0.1px]">Activités</span>
        <svg width="14" height="18" viewBox="0 0 14 18" fill="none" className="mr-[8px]">
          <ellipse cx="7" cy="9" rx="3.500" ry="5" stroke="#c9cf3c" strokeWidth="3" />
          <path d="M6 10L11 15.500" stroke="#d8dc60" strokeWidth="2.500" />
          <path d="M7 8Q7 2 13 1Q13 6 7 8Z" fill="#2a8a1c" />
        </svg>
        <span className="w-[99px] whitespace-nowrap tracking-[0.25px]">QGIS Desktop</span>
        <svg width="10" height="6" className="ml-px mt-px">
          <path d="M0 0.500H10L5 5.500Z" fill="#ccc" />
        </svg>
        <span className="ml-[423px] whitespace-nowrap tracking-[0.7px]">jeu. 19:11</span>
        <span className="ml-[5px] h-[6px] w-[6px] rounded-full bg-[#ccc]" />
        <div className="ml-auto flex items-center">
          <svg width="16" height="16" viewBox="0 0 16 16" className="mr-[11px]">
            <path
              d="M14 0.800Q15.300 1.500 14 3L11 6.200L12.500 14L11 15L8 9.200L5 12L5.300 14.300L4.300 15.200L2.500 12.500L0 11L1 10L3.500 10.200L6 7.200L0.500 4.500L1.500 3L9 4.200L12 1.400Q13.300 0.300 14 0.800Z"
              fill="#d0d0d0"
            />
          </svg>
          <svg width="16" height="14" viewBox="0 0 16 14" fill="none" className="mr-[14px]">
            <path d="M0 4.500H3L7 1V13L3 9.500H0Z" fill="#ccc" />
            <path d="M9 4.500Q10.500 7 9 9.500M11 2.500Q13.500 7 11 11.500" stroke="#ccc" strokeWidth="1.600" />
            <path d="M13 0.500Q16.500 7 13 13.500" stroke="#555" strokeWidth="1.500" />
          </svg>
          <svg width="14" height="16" viewBox="0 0 14 16" fill="none" className="mr-[11px]">
            <path d="M9 14.800H1V2.500H3.500V1H7.500V2.500H10V7" stroke="#ccc" strokeWidth="2" />
            <path d="M3 8H7V9.500H3ZM3 11H6V12.500H3Z" fill="#ccc" />
            <path d="M9.500 7.500L6.500 12H9.500L8.500 15.500L13.500 11H10.500L12.500 8Z" fill="#ccc" />
          </svg>
          <svg width="10" height="6" className="mr-[14px]">
            <path d="M0 0.500H10L5 5.500Z" fill="#ccc" />
          </svg>
        </div>
      </div>

      <div className="flex min-h-0 flex-1 flex-col rounded-t-[6px] bg-[#a5a5a5]">
        <div className="flex h-[37px] shrink-0 items-center rounded-t-[6px] border-b border-[#757575] bg-gradient-to-b from-[#afafaf] to-[#a5a5a5] pl-[500px] text-[13px] font-bold text-[#202425]">
          <span className="whitespace-nowrap tracking-[0.07px]">QGIS 2.14.3–Essen – PHYSIOCAP_CONSOLIDATION</span>
          <svg width="9" height="9" viewBox="0 0 9 9" className="ml-auto mr-[14px]">
            <path d="M1 1L8 8M8 1L1 8" stroke="#202425" strokeWidth="2.300" />
          </svg>
        </div>
        <div className="flex h-[17px] shrink-0 items-center pl-[6px] tracking-[0.22px]">
          <Menu w="w-[45px]">Pro<U>j</U>et</Menu>
          <Menu w="w-[45px]"><U>É</U>diter</Menu>
          <Menu w="w-[32px]">V<U>u</U>e</Menu>
          <Menu w="w-[54px]"><U>C</U>ouche</Menu>
          <Menu w="w-[81px]"><U>P</U>références</Menu>
          <Menu w="w-[67px]">E<U>x</U>tension</Menu>
          <Menu w="w-[54px]"><U>V</U>ecteur</Menu>
          <Menu w="w-[54px]"><U>R</U>aster</Menu>
        </div>
        <MainToolbar />
        <div className="flex h-[619px] min-h-0 shrink-0">
          <LayerPanel />
          <div className="mr-[1px] w-px shrink-0 bg-black" />
          <MapView />
          <EditBar />
        </div>
        <StatusBar />
      </div>

      <SaveDialog />
      <div className="absolute bottom-0 left-0 h-[37px] w-[4px] rounded-tr-[4px] bg-[#2b2b2b]" />
    </div>
  );
}
